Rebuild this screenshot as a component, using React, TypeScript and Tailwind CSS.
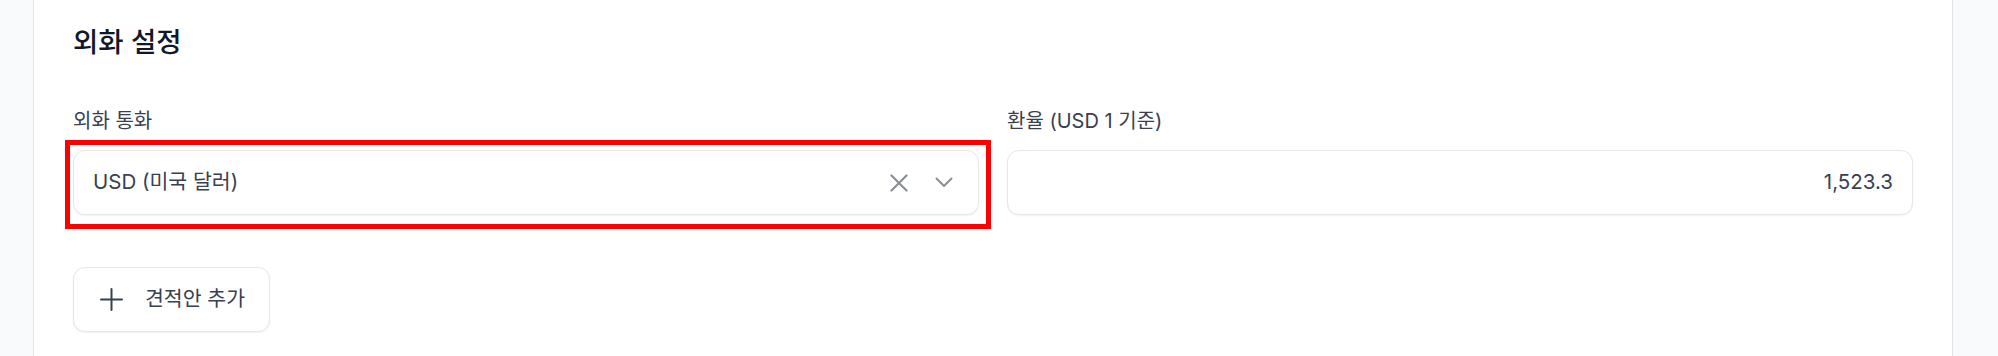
import React from 'react';

const FONT = "font-['Inter','Noto_Sans_CJK_KR',sans-serif]";

function ClearIcon() {
  return (
    <svg width="18" height="18" viewBox="0 0 18 18" fill="none" stroke="#8b8f96" strokeWidth="2.2" strokeLinecap="round">
      <path d="M1.5 1.5 16.5 16.5M16.5 1.5 1.5 16.5" />
    </svg>
  );
}

function ChevronIcon() {
  return (
    <svg width="18" height="11" viewBox="0 0 18 11" fill="none" stroke="#8b8f96" strokeWidth="2" strokeLinecap="round" strokeLinejoin="round">
      <path d="M1.5 1.5 9 9 16.5 1.5" />
    </svg>
  );
}

function PlusIcon() {
  return (
    <svg width="23" height="23" viewBox="0 0 23 23" fill="none" stroke="#374151" strokeWidth="2" strokeLinecap="round">
      <path d="M11.5 1v21M1 11.5h21" />
    </svg>
  );
}

export default function App() {
  return (
    <div className={`flex h-[356px] w-[1998px] overflow-hidden bg-[#f9fafb] ${FONT}`}>
      <div className="w-[33px] shrink-0" />
      <div className="w-[1920px] shrink-0 border-x border-[#e2e5ea] bg-white px-[39px] pt-[25px]">
        <h2 className="text-[27.5px] leading-[35px] font-medium text-[#111827]">외화 설정</h2>

        <div className="mt-[49px] grid grid-cols-[906px_906px] gap-[28px]">
          <div className="flex flex-col gap-[16px]">
            <label className="text-[20px] leading-[25px] text-[#374151]">외화 통화</label>
            <div className="relative">
              <div className="flex h-[65px] items-center rounded-[12px] border border-[#e5e7eb] bg-white pl-[19px] pr-[25px] shadow-[0_1px_2px_rgba(0,0,0,0.06)]">
                <span className="flex-1 text-[20.5px] text-[#374151]">USD (미국 달러)</span>
                <span className="flex items-center">
                  <ClearIcon />
                </span>
                <span className="ml-[27px] flex items-center">
                  <ChevronIcon />
                </span>
              </div>
              <div className="pointer-events-none absolute left-[-8px] top-[-10px] h-[89px] w-[926px] border-[5px] border-[#ff0000]" />
            </div>
          </div>

          <div className="flex flex-col gap-[16px]">
            <label className="text-[20px] leading-[25px] text-[#374151]">환율 (USD 1 기준)</label>
            <div className="flex h-[65px] items-center justify-end rounded-[12px] border border-[#e5e7eb] bg-white pr-[19px] shadow-[0_1px_2px_rgba(0,0,0,0.06)]">
              <span className="text-[20.5px] text-[#374151]">1,523.3</span>
            </div>
          </div>
        </div>

        <button className="mt-[52px] flex h-[65px] items-center gap-[22px] rounded-[12px] border border-[#e5e7eb] bg-white pl-[26px] pr-[24px] shadow-[0_1px_2px_rgba(0,0,0,0.06)]">
          <PlusIcon />
          <span className="text-[20.5px] text-[#374151]">견적안 추가</span>
        </button>
      </div>
    </div>
  );
}
